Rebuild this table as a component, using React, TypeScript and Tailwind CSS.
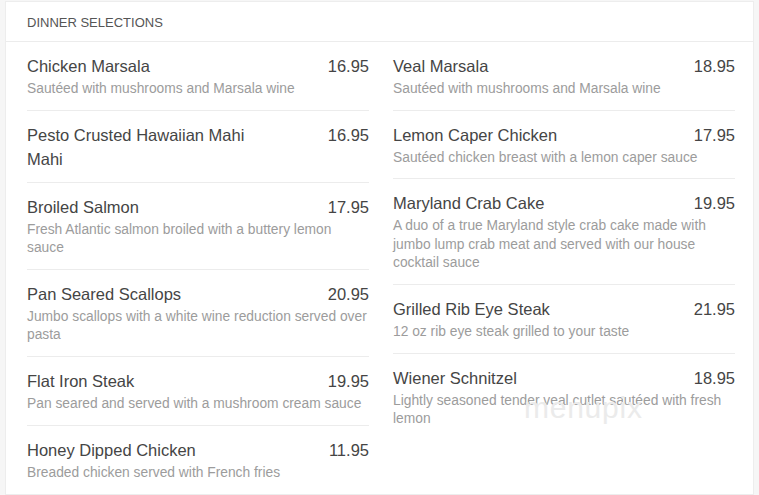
type Item = { name: string; price: string; desc?: string };

const left: Item[] = [
  { name: "Chicken Marsala", price: "16.95", desc: "Sautéed with mushrooms and Marsala wine" },
  { name: "Pesto Crusted Hawaiian Mahi Mahi", price: "16.95" },
  { name: "Broiled Salmon", price: "17.95", desc: "Fresh Atlantic salmon broiled with a buttery lemon sauce" },
  { name: "Pan Seared Scallops", price: "20.95", desc: "Jumbo scallops with a white wine reduction served over pasta" },
  { name: "Flat Iron Steak", price: "19.95", desc: "Pan seared and served with a mushroom cream sauce" },
  { name: "Honey Dipped Chicken", price: "11.95", desc: "Breaded chicken served with French fries" },
];

const right: Item[] = [
  { name: "Veal Marsala", price: "18.95", desc: "Sautéed with mushrooms and Marsala wine" },
  { name: "Lemon Caper Chicken", price: "17.95", desc: "Sautéed chicken breast with a lemon caper sauce" },
  {
    name: "Maryland Crab Cake",
    price: "19.95",
    desc: "A duo of a true Maryland style crab cake made with jumbo lump crab meat and served with our house cocktail sauce",
  },
  { name: "Grilled Rib Eye Steak", price: "21.95", desc: "12 oz rib eye steak grilled to your taste" },
  { name: "Wiener Schnitzel", price: "18.95", desc: "Lightly seasoned tender veal cutlet sautéed with fresh lemon" },
];

function MenuRow({ item, last }: { item: Item; last: boolean }) {
  return (
    <div className={`pt-[12px] pb-[11px] ${last ? "" : "border-b border-[#ececec]"}`}>
      <div className="flex justify-between gap-4 text-[16.5px] leading-6 text-[#454545]">
        <span className="max-w-[230px]">{item.name}</span>
        <span>{item.price}</span>
      </div>
      {item.desc && (
        <p className="mt-[2px] text-[13.8px] leading-[18.6px] text-[#9c9c9c]">{item.desc}</p>
      )}
    </div>
  );
}

export default function App() {
  return (
    <div
      className="min-h-[495px] bg-[#f6f6f6] px-[5px] pt-[1px]"
      style={{ fontFamily: '"Liberation Sans", Arial, sans-serif' }}
    >
      <div className="relative min-h-[494px] border border-[#ededed] bg-white">
        <div className="flex h-[40px] items-center border-b border-[#ececec] px-[21px] pt-[2px] text-[13px] text-[#555]">
          DINNER SELECTIONS
        </div>
        <div className="grid grid-cols-[342px_342px] gap-x-[24px] px-[21px]">
          <div>
            {left.map((it, i) => (
              <MenuRow key={it.name} item={it} last={i === left.length - 1} />
            ))}
          </div>
          <div>
            {right.map((it, i) => (
              <MenuRow key={it.name} item={it} last={i === right.length - 1} />
            ))}
          </div>
        </div>
        <span className="pointer-events-none absolute left-[518px] top-[391px] text-[30px] font-light leading-none tracking-wide text-[#ebebeb]">
          menupix
        </span>
      </div>
    </div>
  );
}
